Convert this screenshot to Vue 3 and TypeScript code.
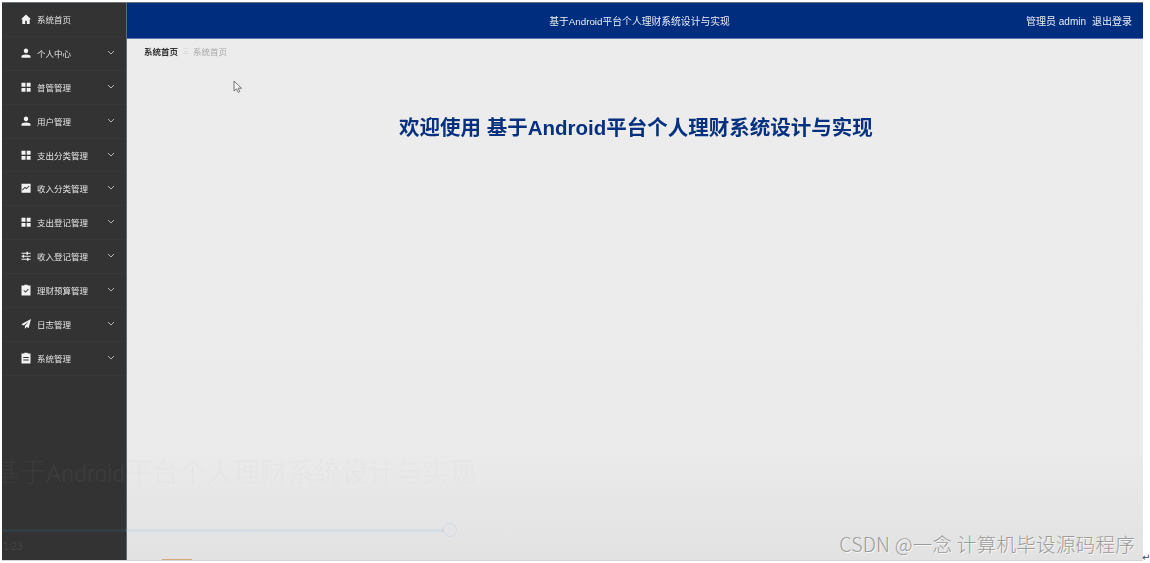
<script setup lang="ts">
interface MenuItem { label: string; icon: string; arrow: boolean }
const menu: MenuItem[] = [
  { label: '系统首页', icon: 'home', arrow: false },
  { label: '个人中心', icon: 'user', arrow: true },
  { label: '普管管理', icon: 'grid', arrow: true },
  { label: '用户管理', icon: 'user', arrow: true },
  { label: '支出分类管理', icon: 'grid', arrow: true },
  { label: '收入分类管理', icon: 'chart', arrow: true },
  { label: '支出登记管理', icon: 'grid', arrow: true },
  { label: '收入登记管理', icon: 'sliders', arrow: true },
  { label: '理财预算管理', icon: 'check', arrow: true },
  { label: '日志管理', icon: 'plane', arrow: true },
  { label: '系统管理', icon: 'clip', arrow: true },
]
const icons: Record<string, string> = {
  home: 'M6 1.500 1 6.300h1.300V11h2.900V7.800h1.600V11h2.900V6.300H11z',
  user: 'M6 1.500c1.400 0 2.200 1 2.200 2.300S7.400 6.300 6 6.300 3.800 5.100 3.800 3.800 4.600 1.500 6 1.500zM1.500 10.800V9.300c0-1.200 2-1.900 4.500-1.900s4.500.7 4.500 1.900v1.500z',
  grid: 'M1.500 1.800h4v3.900h-4zM6.700 1.800h3.900v3.900H6.700zM1.500 6.900h4v3.900h-4zM6.700 6.900h3.900v3.900H6.700z',
  chart: 'M1.500 1.800h9.100v9H1.500zM2.600 8.400l2.400-2.400 1.500 1.300 3-3-.6-.6-2.400 2.400-1.500-1.300-3 3z',
  sliders: 'M1.500 2.800h5v-1h1.400v1h2.700v1H7.900v1H6.500v-1h-5zM1.500 5.800h1.200v-1h1.400v1h6.500v1H4.100v1H2.700v-1H1.500zM1.500 8.800h5.500v-1h1.400v1h2.200v1H8.400v1H7v-1H1.500z',
  check: 'M4.300 1.500V.8h3.400v.7h2.800v10H1.500v-10zM3.400 6.600l2.100 2.200 3.200-3.400-.7-.7-2.500 2.700-1.400-1.500z',
  plane: 'M11 1 1.200 6.300l2.600 1.100L8.800 3.600 4.900 8.100V11l1.600-1.900 2.200 1z',
  clip: 'M4.300 1.500V.8h3.400v.7h2.800v10H1.500v-10zM3.300 5v1h5.400V5zM3.300 7.500v1h5.400v-1z',
}
</script>

<template>
  <div class="page">
    <div class="frame">
      <aside class="sidebar">
        <div v-for="item in menu" :key="item.label" class="row">
          <svg class="icon" viewBox="0 0 12 12" width="12" height="12">
            <path :d="icons[item.icon]" fill="#f2f2f2" fill-rule="evenodd" />
          </svg>
          <span class="label">{{ item.label }}</span>
          <svg v-if="item.arrow" class="chev" viewBox="0 0 8 5" width="8" height="5">
            <path d="M1 1l3 3 3-3" fill="none" stroke="#b4b4b4" stroke-width="1" />
          </svg>
        </div>
      </aside>
      <div class="body">
        <header class="topbar">
          <div class="title">基于Android平台个人理财系统设计与实现</div>
          <div class="user"><span>管理员 admin</span><span>退出登录</span></div>
        </header>
        <main class="main">
          <nav class="crumbs">
            <span class="crumb-a">系统首页</span>
            <span class="sep">三</span>
            <span class="crumb-b">系统首页</span>
          </nav>
          <h1 class="welcome">欢迎使用 基于Android平台个人理财系统设计与实现</h1>
        </main>
      </div>
      <svg class="cursor" viewBox="0 0 10 14" width="10" height="14">
        <path d="M1 1v10l2.500-2.200 1.700 3.600 1.600-.8L5.200 8.200H8.500z" fill="#f4f4f4" stroke="#666" stroke-width=".9" />
      </svg>
      <div class="ghost-title">基于<span class="ghost-latin">Android</span>平台个人理财系统设计与实现</div>
      <div class="track"></div>
      <div class="knob"></div>
      <div class="time">1:23</div>
      <div class="speck"></div>
      <div class="mark">CSDN @一念 计算机毕设源码程序</div>
    </div>
    <div class="para">↵</div>
  </div>
</template>

<style>
html, body { margin: 0; background: #fff; }
</style>

<style scoped>
.page {
  width: 1150px;
  height: 563px;
  box-sizing: border-box;
  padding: 2px 7px 2px 2px;
  position: relative;
  overflow: hidden;
  background: #fff;
  font-family: "Liberation Sans", "Noto Sans CJK SC", sans-serif;
}
.frame {
  position: relative;
  height: 100%;
  display: flex;
  overflow: hidden;
  border-top: 1px solid #6d7480;
  box-sizing: border-box;
  border-bottom: 1px solid #d4d4d4;
}
.sidebar {
  width: 124px;
  flex: none;
  background: #333;
  border-right: 1px solid #5d6a78;
  filter: blur(.35px);
}
.row {
  height: 33.900px;
  display: flex;
  align-items: center;
  box-sizing: border-box;
  padding: 0 0 1px 18px;
  border-bottom: 1px solid #373737;
  position: relative;
}
.icon { flex: none; }
.label {
  margin-left: 5px;
  font-size: 8.500px;
  color: #e4e4e4;
  white-space: nowrap;
}
.chev { position: absolute; left: 105px; top: 13px; }
.body { flex: 1; display: flex; flex-direction: column; min-width: 0; }
.topbar {
  height: 35px;
  flex: none;
  background: #002d7e;
  border-bottom: 1px solid #5b78ac;
  display: flex;
  align-items: center;
  justify-content: flex-end;
  position: relative;
  color: #e8edf5;
  font-size: 9.800px;
  padding-right: 11px;
  filter: blur(.3px);
}
.title {
  position: absolute;
  left: 9px;
  right: 0;
  text-align: center;
}
.user { display: flex; gap: 6px; font-size: 10px; }
.main {
  flex: 1;
  background: linear-gradient(#ececec 0, #ebebeb 78%, #e2e2e2 100%);
}
.crumbs {
  display: flex;
  align-items: center;
  gap: 5px;
  padding: 3px 0 0 17px;
  height: 17px;
  font-size: 8.500px;
  filter: blur(.3px);
}
.crumb-a { color: #333; font-weight: 700; }
.sep { color: #d0d0d0; font-size: 6px; margin-right: -1px; }
.crumb-b { color: #a8a8a8; }
.welcome {
  margin: 55px 0 0 272px;
  font-size: 20.500px;
  line-height: 28px;
  font-weight: 700;
  color: #07307e;
  white-space: nowrap;
  filter: blur(.3px);
}
.cursor { position: absolute; left: 231px; top: 77px; }
.ghost-title {
  position: absolute;
  left: -10px;
  top: 452px;
  font-size: 27px;
  line-height: 32px;
  font-weight: 300;
  font-family: "Noto Sans CJK SC", sans-serif;
  color: rgba(175, 175, 175, .065);
  white-space: nowrap;
  filter: blur(.5px);
}
.ghost-latin { font-size: 23px; font-family: "Liberation Sans", sans-serif; }
.track {
  position: absolute;
  left: 0;
  top: 526px;
  width: 442px;
  height: 3px;
  background: linear-gradient(90deg, rgba(50, 85, 105, .3) 124px, rgba(160, 195, 225, .22) 124px);
}
.knob {
  position: absolute;
  left: 441px;
  top: 520px;
  width: 14px;
  height: 14px;
  box-sizing: border-box;
  border-radius: 50%;
  border: 1.500px solid rgba(160, 195, 225, .28);
}
.time {
  position: absolute;
  left: 1px;
  top: 538px;
  font-size: 10px;
  line-height: 12px;
  color: rgba(255, 255, 255, .1);
}
.speck {
  position: absolute;
  left: 160px;
  bottom: 0;
  width: 30px;
  height: 1px;
  background: #d8a878;
}
.mark {
  position: absolute;
  right: 8px;
  top: 528px;
  font-family: "Noto Sans CJK SC", sans-serif;
  font-size: 19.600px;
  line-height: 26px;
  font-weight: 300;
  letter-spacing: .2px;
  color: #9c9c9c;
  white-space: nowrap;
  text-shadow: 1px 1px 0 #f6f6f6;
}
.para {
  position: absolute;
  left: 1142px;
  top: 552px;
  font-size: 10px;
  line-height: 11px;
  color: #444;
  font-family: "DejaVu Sans", sans-serif;
}
</style>
